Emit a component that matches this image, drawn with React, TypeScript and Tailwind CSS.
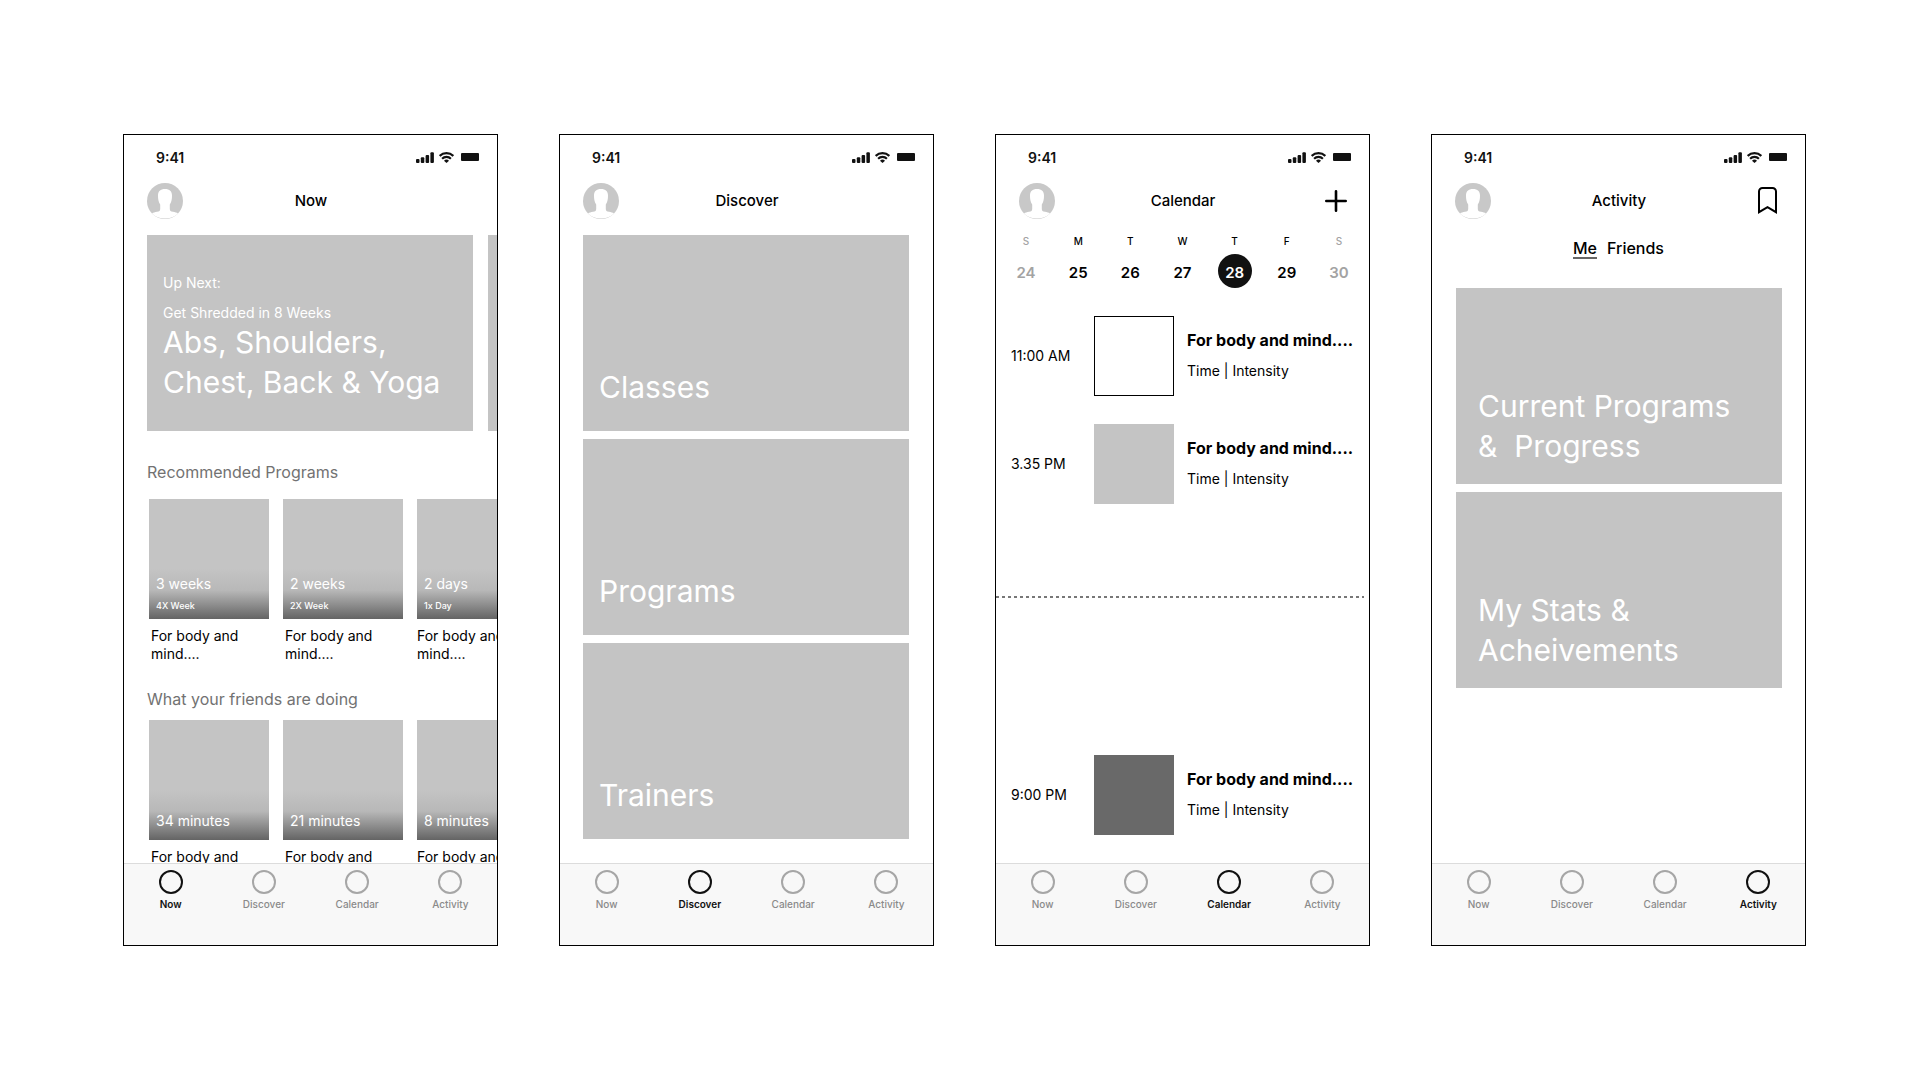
import type { ReactNode } from 'react'
import clsx from 'clsx'

const TABS = ['Now', 'Discover', 'Calendar', 'Activity'] as const
type Tab = (typeof TABS)[number]

const PROGRAMS = [
  { title: '3 weeks', note: '4X Week' },
  { title: '2 weeks', note: '2X Week' },
  { title: '2 days', note: '1x Day' },
]

const FRIENDS = [{ title: '34 minutes' }, { title: '21 minutes' }, { title: '8 minutes' }]

const WEEK = [
  { letter: 'S', date: 24, muted: true },
  { letter: 'M', date: 25 },
  { letter: 'T', date: 26 },
  { letter: 'W', date: 27 },
  { letter: 'T', date: 28, selected: true },
  { letter: 'F', date: 29 },
  { letter: 'S', date: 30, muted: true },
]

function StatusBar() {
  return (
    <div className="flex items-start justify-between pt-3.5 pr-[18px] pl-8 text-[#111]">
      <span className="text-sm/[18px] font-semibold">9:41</span>
      <div className="flex h-4 items-center">
        <svg width="18" height="11" viewBox="0 0 18 11" fill="currentColor" aria-hidden="true">
          <rect x="0" y="7" width="3.500" height="4" rx="1" />
          <rect x="4.800" y="5.300" width="3.500" height="5.700" rx="1" />
          <rect x="9.600" y="3" width="3.500" height="8" rx="1" />
          <rect x="14.400" y="0.300" width="3.500" height="10.700" rx="1" />
        </svg>
        <svg className="ml-[5px]" width="15" height="11" viewBox="0 0 15 11" fill="none" stroke="currentColor" strokeWidth="2.100" aria-hidden="true">
          <path d="M0.700 3.900a9.700 9.700 0 0 1 13.600 0" />
          <path d="M3.100 6.700a6.200 6.200 0 0 1 8.800 0" />
          <path d="M5 8.700a3.500 3.500 0 0 1 5 0L7.500 11z" fill="currentColor" stroke="none" />
        </svg>
        <span className="ml-[7px] h-2 w-[18px] rounded-[1px] bg-[#111]" />
      </div>
    </div>
  )
}

function Avatar() {
  return (
    <svg width="36" height="36" viewBox="0 0 36 36" aria-hidden="true">
      <circle cx="18" cy="18" r="18" fill="#c8c8c8" />
      <path
        fill="#fff"
        d="M18 6c4.600 0 7 2.200 7 6.600 0 3.600-.4 6.200-2.200 9v4.200c0 2.200.8 2.500 3.200 3 2 .4 3.700.8 5 1.600C27.800 33.800 23.200 35.600 18 35.600S8.200 33.800 5 30.400c1.300-.8 3-1.200 5-1.600 2.400-.5 3.200-.8 3.200-3v-4.200C11.400 18.800 11 16.200 11 12.600 11 8.200 13.400 6 18 6z"
      />
    </svg>
  )
}

function Header({ title, action }: { title: string; action?: ReactNode }) {
  return (
    <header className="grid grid-cols-[36px_1fr_36px] items-center pt-4 pr-[22px] pl-[23px]">
      <button type="button" aria-label="Profile">
        <Avatar />
      </button>
      <h1 className="text-center text-[15px]/5 font-medium">{title}</h1>
      {action}
    </header>
  )
}

function TabBar({ active }: { active: Tab }) {
  return (
    <nav className="grid h-[82px] shrink-0 grid-cols-4 border-t border-[#dcdcdc] bg-[#f8f8f8] pt-1.5">
      {TABS.map(tab => (
        <a
          key={tab}
          href={`#${tab.toLowerCase()}`}
          className={clsx(
            'flex flex-col items-center gap-1 text-[10px]/3',
            tab === active ? 'font-semibold text-[#111]' : 'font-medium text-[#8a8a8a]',
          )}
        >
          <span className={clsx('size-6 rounded-full border-2', tab === active ? 'border-[#111]' : 'border-[#a6a6a6]')} />
          {tab}
        </a>
      ))}
    </nav>
  )
}

function Phone({ tab, action, children }: { tab: Tab; action?: ReactNode; children: ReactNode }) {
  return (
    <section className="flex h-[812px] min-w-0 flex-col border border-black bg-white">
      <StatusBar />
      <Header title={tab} action={action} />
      <div className="min-h-0 flex-1 overflow-hidden">{children}</div>
      <TabBar active={tab} />
    </section>
  )
}

function Shelf({ heading, items, className }: { heading: string; items: { title: string; note?: string }[]; className: string }) {
  return (
    <>
      <h2 className="pl-[23px] text-base/6 text-[#727272]">{heading}</h2>
      <div className={clsx('flex gap-3.5 pl-[25px]', className)}>
        {items.map((item, i) => (
          <a key={item.title} href="#program" className="w-[120px] shrink-0">
            <div
              className={clsx(
                'flex h-[120px] flex-col justify-end bg-[linear-gradient(#c4c4c4_58%,#b8b8b8_76%,#646464_100%)] px-[7px] text-white',
                item.note ? 'gap-[7px] pb-[7px]' : 'pb-2.5',
              )}
            >
              <span className="text-sm/[18px]">{item.title}</span>
              {item.note && <span className="text-[9px]/3 font-medium">{item.note}</span>}
            </div>
            <p className={clsx('pt-2 text-sm/[18px]', i < 2 && 'pl-0.5')}>
              For body and
              <br />
              mind....
            </p>
          </a>
        ))}
      </div>
    </>
  )
}

function NowScreen() {
  return (
    <Phone tab="Now">
      <div className="mt-4 mb-[29px] flex gap-[15px] pl-[23px]">
        <a href="#up-next" className="flex h-[196px] w-[326px] shrink-0 flex-col justify-end bg-[#c4c4c4] px-4 pb-[29px] text-white">
          <span className="mb-3 text-sm/[18px]">Up Next:</span>
          <span className="text-sm/[18px]">Get Shredded in 8 Weeks</span>
          <span className="text-[30px]/10 whitespace-nowrap">
            Abs, Shoulders,
            <br />
            Chest, Back &amp; Yoga
          </span>
        </a>
        <div className="h-[196px] w-[326px] shrink-0 bg-[#c4c4c4]" />
      </div>
      <Shelf heading="Recommended Programs" items={PROGRAMS} className="pt-[15px] pb-6" />
      <Shelf heading="What your friends are doing" items={FRIENDS} className="pt-[9px]" />
    </Phone>
  )
}

function DiscoverScreen() {
  return (
    <Phone tab="Discover">
      <div className="mt-4 flex flex-col gap-2 pr-6 pl-[23px]">
        {['Classes', 'Programs', 'Trainers'].map(name => (
          <a key={name} href={`#${name.toLowerCase()}`} className="flex h-[196px] items-end bg-[#c4c4c4] px-4 pb-6 text-[30px]/10 text-white">
            {name}
          </a>
        ))}
      </div>
    </Phone>
  )
}

function Event({ time, thumb }: { time: string; thumb: string }) {
  return (
    <div className="flex items-center pl-[15px]">
      <time className="w-[83px] shrink-0 text-sm/[18px]">{time}</time>
      <div className={clsx('size-20 shrink-0', thumb)} />
      <div className="flex flex-col gap-2.5 pb-1 pl-[13px] whitespace-nowrap">
        <h2 className="text-base/6 font-bold">For body and mind....</h2>
        <p className="text-sm/[18px]">Time | Intensity</p>
      </div>
    </div>
  )
}

function CalendarScreen() {
  const add = (
    <button type="button" aria-label="Add class" className="justify-self-end">
      <svg width="22" height="22" viewBox="0 0 22 22" stroke="#000" strokeWidth="2.600" strokeLinecap="round">
        <path d="M11 1.300v19.400M1.300 11h19.400" />
      </svg>
    </button>
  )
  return (
    <Phone tab="Calendar" action={add}>
      <div className="mt-4 grid grid-cols-7 px-1">
        {WEEK.map(day => (
          <button
            key={day.date}
            type="button"
            className={clsx('flex flex-col items-center gap-[7px]', day.muted ? 'text-[#a3a3a3]' : 'text-black')}
          >
            <span className="text-[10px]/3 font-medium">{day.letter}</span>
            <span
              className={clsx(
                'flex size-[34px] items-center justify-center rounded-full pt-[3px] text-[15px]/5 font-semibold',
                day.selected && 'bg-[#111] text-white',
              )}
            >
              {day.date}
            </span>
          </button>
        ))}
      </div>
      <div className="mt-7 flex flex-col gap-7">
        <Event time="11:00 AM" thumb="border border-black" />
        <Event time="3.35 PM" thumb="bg-[#c4c4c4]" />
      </div>
      {/* current time marker */}
      <hr className="mt-[92px] mr-[5px] mb-[157px] h-0.5 border-0 bg-[repeating-linear-gradient(to_right,#777_0_3px,transparent_3px_6px)]" />
      <Event time="9:00 PM" thumb="bg-[#696969]" />
    </Phone>
  )
}

function ActivityScreen() {
  const saved = (
    <button type="button" aria-label="Saved" className="justify-self-end">
      <svg width="28" height="28" viewBox="0 0 28 28" fill="none" stroke="#000" strokeWidth="2">
        <path d="M4 25.200V4.500a3.500 3.500 0 0 1 3.500-3.500h10a3.500 3.500 0 0 1 3.500 3.500v20.700l-8.500-5z" />
      </svg>
    </button>
  )
  return (
    <Phone tab="Activity" action={saved}>
      <div className="mt-5 mb-[29px] flex justify-center gap-2.5 text-base/[18px] font-medium">
        <button type="button" className="border-b-2 border-[#666]">
          Me
        </button>
        <button type="button" className="border-b-2 border-transparent">
          Friends
        </button>
      </div>
      <div className="flex flex-col gap-2 pr-[23px] pl-6 text-[30px]/10 text-white">
        {['Current Programs\n&  Progress', 'My Stats &\nAcheivements'].map(name => (
          <a key={name} href="#stats" className="flex h-[196px] items-end bg-[#c4c4c4] px-[22px] pb-[18px] whitespace-pre">
            {name}
          </a>
        ))}
      </div>
    </Phone>
  )
}

export default function App() {
  return (
    <main className="grid min-h-screen grid-cols-1 content-center gap-[61px] bg-white pr-[114px] pl-[123px] font-['Inter',sans-serif] text-black md:grid-cols-2 xl:grid-cols-4">
      <NowScreen />
      <DiscoverScreen />
      <CalendarScreen />
      <ActivityScreen />
    </main>
  )
}
